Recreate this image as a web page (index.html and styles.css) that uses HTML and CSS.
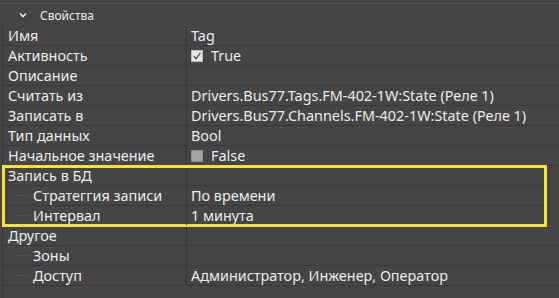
FILE: index.html
```html
<!DOCTYPE html>
<html lang="ru">
<head>
    <meta charset="UTF-8">
    <meta name="viewport" content="width=device-width, initial-scale=1.0">
    <title>Свойства</title>
    <link rel="stylesheet" href="styles.css">
</head>
<body>
    <div class="panel">
        <div class="header">
            <span class="chevron">
                <svg width="8" height="6" viewBox="0 0 8 6"><path d="M1 1.5 L4 4.5 L7 1.5" fill="none" stroke="#e6e6e6" stroke-width="1.6"/></svg>
            </span>
            <span class="header-title">Свойства</span>
        </div>

        <div class="grid">
            <div class="row"><div class="name">Имя</div><div class="val">Tag</div></div>
            <div class="row"><div class="name">Активность</div><div class="val"><span class="check on"><svg width="10" height="10" viewBox="0 0 10 10"><path d="M1.8 5.2 L4 7.6 L8.4 1.8" fill="none" stroke="#555" stroke-width="1.4"/></svg></span>True</div></div>
            <div class="row"><div class="name">Описание</div><div class="val"></div></div>
            <div class="row"><div class="name">Считать из</div><div class="val">Drivers.Bus77.Tags.FM-402-1W:State (Реле 1)</div></div>
            <div class="row"><div class="name">Записать в</div><div class="val">Drivers.Bus77.Channels.FM-402-1W:State (Реле 1)</div></div>
            <div class="row"><div class="name">Тип данных</div><div class="val">Bool</div></div>
            <div class="row"><div class="name">Начальное значение</div><div class="val"><span class="check off"></span>False</div></div>

            <div class="group highlight">
                <div class="row"><div class="name">Запись в БД</div><div class="val"></div></div>
                <div class="row child"><div class="name">Стратеггия записи</div><div class="val">По времени</div></div>
                <div class="row child"><div class="name">Интервал</div><div class="val">1 минута</div></div>
            </div>

            <div class="row"><div class="name">Другое</div><div class="val"></div></div>
            <div class="row child"><div class="name">Зоны</div><div class="val"></div></div>
            <div class="row child"><div class="name">Доступ</div><div class="val">Администратор, Инженер, Оператор</div></div>
        </div>
    </div>
</body>
</html>
```

FILE: styles.css
```css
/*Страница*/
body {
    margin: 0;
    background-color: #454545;
    font-family: "Noto Sans", "Open Sans", sans-serif;
    color: #ececec;
}

/*Панель свойств*/
.panel {
    width: 559px;
    height: 298px;
    box-sizing: border-box;
    padding-top: 3px;
    overflow: hidden;
}

/*Заголовок категории*/
.header {
    height: 22px;
    border-top: 1px solid #575757;
    display: flex;
    align-items: center;
    font-size: 12px;
}

.chevron {
    width: 8px;
    height: 6px;
    display: flex;
    margin-left: 19px;
    margin-right: 13px;
}

.header-title {
    color: #e8e8e8;
}

/*Таблица свойств*/
.grid {
    margin-left: 2px;
    border-left: 1px solid #3a3a3a;
    height: 280px;
}

.row {
    display: grid;
    grid-template-columns: 184px 1fr;
    height: 20px;
    box-sizing: border-box;
    border-bottom: 1px solid #3b3b3b;
    font-size: 14.4px;
    line-height: 19px;
    white-space: nowrap;
}

.name {
    padding-left: 5px;
    border-right: 1px solid #3a3a3a;
}

.val {
    padding-left: 4px;
    display: flex;
    align-items: center;
}

/*Вложенные строки*/
.child .name {
    padding-left: 30px;
    position: relative;
}

/*Линии дерева*/
.child .name::before {
    content: "";
    position: absolute;
    left: 13px;
    top: 9px;
    width: 14px;
    border-top: 1px solid #525252;
}

/*Флажки*/
.check {
    width: 12px;
    height: 12px;
    box-sizing: border-box;
    margin-right: 8px;
    display: flex;
    align-items: center;
    justify-content: center;
}

.check.on {
    background-color: #e4e4e4;
    border: 1px solid #bdbdbd;
}

.check.off {
    background-color: #a3a3a3;
    border: 1px solid #8f8f8f;
}

/*Выделение группы*/
.highlight {
    outline: 3px solid #f2e33b;
    outline-offset: -2px;
    margin-right: 13px;
}
```
